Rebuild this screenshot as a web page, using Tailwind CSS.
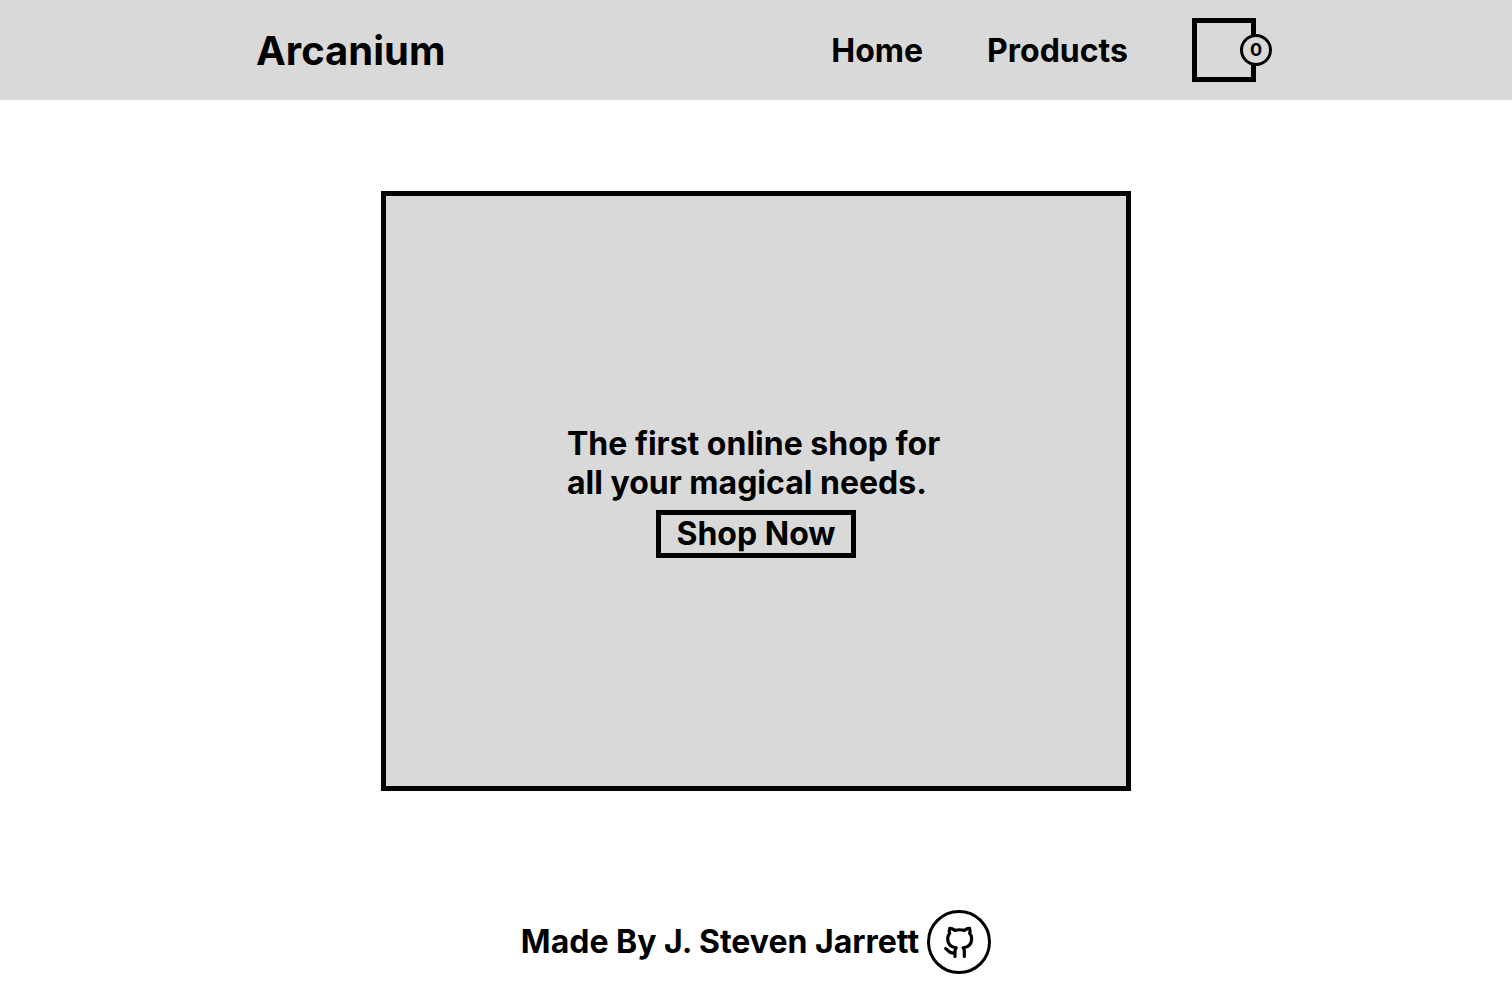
<!DOCTYPE html>
<html lang="en">
<head>
<meta charset="utf-8">
<meta name="viewport" content="width=device-width, initial-scale=1">
<title>Arcanium</title>
<script src="https://cdn.jsdelivr.net/npm/@tailwindcss/browser@4"></script>
</head>
<body class="flex min-h-screen flex-col bg-white font-['Inter',sans-serif] text-[32px] leading-[39px] font-bold text-black">
  <header class="bg-[#d9d9d9]">
    <div class="mx-auto flex h-[100px] max-w-[1000px] items-center justify-between">
      <h1 class="text-[40px] leading-[49px]"><a href="#">Arcanium</a></h1>
      <nav class="flex items-center gap-16">
        <a href="#">Home</a>
        <a href="#products">Products</a>
        <button type="button" aria-label="Cart, 0 items" class="relative size-16 border-5 border-black">
          <span class="absolute top-1/2 -right-[21px] flex size-8 -translate-y-1/2 items-center justify-center rounded-full border-3 border-black bg-[#d9d9d9] text-lg">0</span>
        </button>
      </nav>
    </div>
  </header>
  <main class="flex grow items-center justify-center">
    <section class="flex h-[600px] w-full max-w-[750px] flex-col items-center justify-center gap-2 border-5 border-black bg-[#d9d9d9]">
      <p class="w-[378px]">The first online shop for all your magical needs.</p>
      <a href="#products" class="flex h-12 w-[200px] items-center justify-center border-5 border-black leading-[38px]">Shop Now</a>
    </section>
  </main>
  <footer class="flex h-[100px] items-end justify-center gap-2 pb-2">
    <p class="py-[13px] leading-[38px]">Made By J. Steven Jarrett</p>
    <a href="#github" aria-label="GitHub" class="flex size-16 items-center justify-center rounded-full border-3 border-black">
      <svg class="size-8" viewBox="0 -0.8 24 24" fill="none" stroke="currentColor" stroke-width="2.4" stroke-linecap="round" stroke-linejoin="round" aria-hidden="true"><path d="M9 19.400c-4 1.200-5-2.200-7-3.200m14 5.800v-3.870a3.370 3.370 0 0 0-.94-2.610c3.140-.35 6.440-1.540 6.440-7A5.440 5.440 0 0 0 20 4.770 5.070 5.070 0 0 0 19.910 1S18.730.65 16 2.480a13.380 13.380 0 0 0-7 0C6.270.65 5.090 1 5.090 1A5.070 5.070 0 0 0 5 4.770a5.440 5.440 0 0 0-1.500 3.780c0 5.420 3.300 6.610 6.440 7A3.370 3.370 0 0 0 9 18.130V22"/></svg>
    </a>
  </footer>
</body>
</html>
